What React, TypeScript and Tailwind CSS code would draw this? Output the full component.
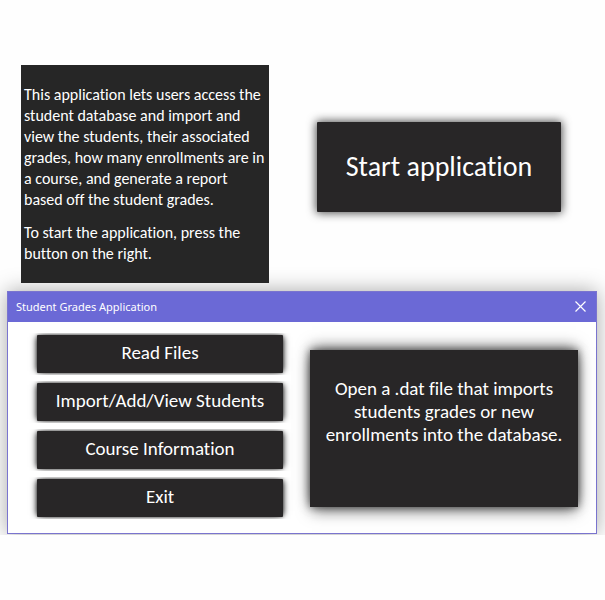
const menu = ["Read Files", "Import/Add/View Students", "Course Information", "Exit"];

function Intro() {
  return (
    <section className="flex items-start gap-12 pt-[65px] pr-11 pl-[21px]">
      <div className="relative z-10 flex h-[218px] w-[248px] shrink-0 flex-col gap-3 bg-[#262626] pt-[19px] pl-[3px] text-[16px] leading-[21px] text-white">
        <p>
          This application lets users access the
          <br />
          student database and import and
          <br />
          view the students, their associated
          <br />
          grades, how many enrollments are in
          <br />
          a course, and generate a report
          <br />
          based off the student grades.
        </p>
        <p>
          To start the application, press the
          <br />
          button on the right.
        </p>
      </div>
      <button
        type="button"
        className="mt-[57px] h-[90px] flex-1 rounded-[1px] bg-[#282627] text-[28px] text-white shadow-[0_0_10px_1px_rgba(0,0,0,0.7)]"
      >
        Start application
      </button>
    </section>
  );
}

function Window() {
  return (
    <section className="-mt-4 overflow-hidden pt-6 pr-2 pb-px pl-[7px]">
      <div className="border border-[#7a74cf] bg-white shadow-[0_0_20px_0_rgba(0,0,0,0.35)]">
        <header className="flex h-[30px] items-center justify-between bg-[#6b69d6] pr-2.5 pl-2 text-white">
          <h1 className="font-['Noto_Sans',sans-serif] text-[11px]">Student Grades Application</h1>
          <button type="button" aria-label="Close" className="-mt-0.5">
            <svg width="11" height="11" viewBox="0 0 11 11" stroke="currentColor" strokeWidth="1.2" fill="none">
              <path d="M.5.5l10 10M10.500.5l-10 10" />
            </svg>
          </button>
        </header>
        <div className="flex items-start pt-[11px] pr-[18px] pb-3.5 pl-[17px]">
          <nav className="flex flex-col gap-1.5">
            {menu.map((label) => (
              <div key={label} className="overflow-hidden px-3 py-0.5">
                <button
                  type="button"
                  className="block h-[38px] w-[246px] rounded-[1px] bg-[#282627] pb-0.5 text-[19px] text-white shadow-[3px_0_6px_-2px_rgba(0,0,0,0.75),-3px_0_6px_-2px_rgba(0,0,0,0.75),0_0_3px_0_rgba(0,0,0,0.4)]"
                >
                  {label}
                </button>
              </div>
            ))}
          </nav>
          <p className="mt-[17px] ml-[15px] h-[157px] flex-1 bg-[#282627] pt-[27px] text-center text-[19px] leading-[23px] text-white shadow-[0_0_8px_0_rgba(0,0,0,0.5),0_-5px_14px_-2px_rgba(0,0,0,0.5),0_6px_14px_-2px_rgba(0,0,0,0.5)]">
            Open a .dat file that imports
            <br />
            students grades or new
            <br />
            enrollments into the database.
          </p>
        </div>
      </div>
    </section>
  );
}

export default function App() {
  return (
    <main className="min-h-screen bg-[#fefefe] font-['Carlito','Lato',sans-serif] [font-variant-ligatures:none]">
      <Intro />
      <Window />
    </main>
  );
}
